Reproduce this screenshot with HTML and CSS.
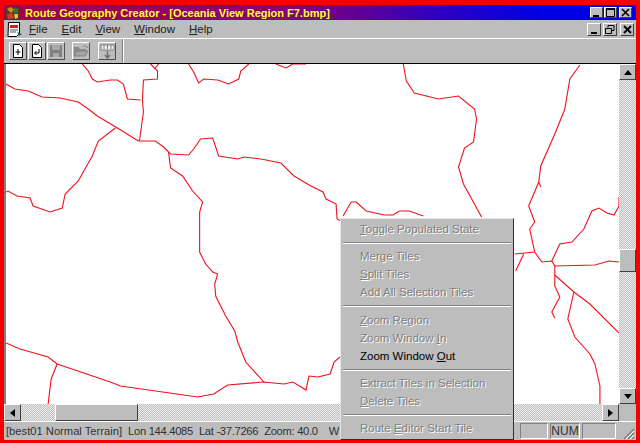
FILE: index.html
```html
<!DOCTYPE html>
<html lang="en">
<head>
  <meta charset="UTF-8">
  <meta name="viewport" content="width=device-width, initial-scale=1.0">
  <title>Route Geography Creator</title>
  <link rel="stylesheet" href="styles.css">
</head>
<body>
  <div class="window">
    <div class="titlebar">
      <svg class="app-icon" width="15" height="14" viewBox="0 0 15 14">
        <rect x="1" y="1" width="13" height="12" fill="#5a3a1a"/>
        <path d="M2 3l4-2 3 3-3 3z" fill="#d98a20"/>
        <path d="M8 2l5 1 0 4-4 0z" fill="#2f7a3a"/>
        <path d="M2 8l5-1 2 5-6 1z" fill="#c8402a"/>
        <path d="M9 8l4 0 0 4-3 1z" fill="#e0c040"/>
      </svg>
      <span class="title-text">Route Geography Creator - [Oceania View Region F7.bmp]</span>
      <div class="win-btns">
        <button class="win-btn"><svg width="9" height="9" viewBox="0 0 9 9"><rect x="1" y="7" width="6" height="2" fill="#000"/></svg></button>
        <button class="win-btn"><svg width="9" height="9" viewBox="0 0 9 9"><path d="M0.5 1.5h8v7h-8z" fill="none" stroke="#000"/><rect x="0" y="0" width="9" height="2" fill="#000"/></svg></button>
        <button class="win-btn btn-close"><svg width="9" height="9" viewBox="0 0 9 9"><path d="M1 1l7 7M8 1l-7 7" stroke="#000" stroke-width="1.6"/></svg></button>
      </div>
    </div>

    <div class="menubar">
      <svg class="doc-icon" width="16" height="15" viewBox="0 0 16 15">
        <path d="M1.5 .5h11v11l-3 3h-8.500z" fill="#fff" stroke="#000"/>
        <rect x="3" y="3" width="8" height="3" fill="#d02020"/>
        <path d="M3 8h8M3 10h6" stroke="#555"/>
        <path d="M10 10l5 2-3 2z" fill="#106060"/>
      </svg>
      <span class="menu-title"><u>F</u>ile</span>
      <span class="menu-title"><u>E</u>dit</span>
      <span class="menu-title"><u>V</u>iew</span>
      <span class="menu-title"><u>W</u>indow</span>
      <span class="menu-title"><u>H</u>elp</span>
      <div class="win-btns doc-btns">
        <button class="win-btn"><svg width="9" height="9" viewBox="0 0 9 9"><rect x="1" y="7" width="6" height="2" fill="#000"/></svg></button>
        <button class="win-btn"><svg width="10" height="9" viewBox="0 0 10 9"><path d="M3 2.500v-2h6v5h-2M.5 3.500h6v5h-6z" fill="none" stroke="#000"/></svg></button>
        <button class="win-btn btn-close"><svg width="9" height="9" viewBox="0 0 9 9"><path d="M1 1l7 7M8 1l-7 7" stroke="#000" stroke-width="1.800"/></svg></button>
      </div>
    </div>

    <div class="toolbar">
      <button class="tool-btn"><svg width="12" height="14" viewBox="0 0 12 14"><path d="M1.500 .5h6l3 3v10h-9z" fill="#fff" stroke="#000"/><path d="M6 5v6M3.500 8h5" stroke="#000"/></svg></button>
      <button class="tool-btn"><svg width="12" height="14" viewBox="0 0 12 14"><path d="M1.500 .5h6l3 3v10h-9z" fill="#fff" stroke="#000"/><path d="M8 5v4h-4M5.500 7l-2 2 2 2" fill="none" stroke="#000"/></svg></button>
      <button class="tool-btn"><svg width="14" height="14" viewBox="0 0 14 14"><path d="M1 1h11l1 1v11h-12z" fill="#808080"/><rect x="3" y="1" width="8" height="5" fill="#a8a8a8"/><rect x="4" y="9" width="6" height="4" fill="#a8a8a8"/></svg></button>
      <button class="tool-btn tool-gap"><svg width="16" height="12" viewBox="0 0 16 12"><path d="M1 2h5l1 2h6v7h-12z" fill="#8a8a8a"/><path d="M3 6h12l-3 5h-11z" fill="#a4a4a4" stroke="#808080"/><path d="M10 1l3 0 2 2" fill="none" stroke="#808080"/></svg></button>
      <button class="tool-btn tool-gap-wide"><svg width="15" height="15" viewBox="0 0 15 15"><path d="M1 1h13v5h-13z" fill="#f0f0f0" stroke="#808080"/><path d="M4 1v4M7.500 1v4M11 1v4" stroke="#808080"/><path d="M7.500 7v6M5 11l2.500 3 2.500-3" fill="none" stroke="#707070" stroke-width="1.500"/></svg></button>
      <div class="tool-sep"></div>
    </div>

    <div class="workspace">
      <svg class="map" viewBox="6 65 611 340" preserveAspectRatio="none" fill="none" stroke="#f2101c" stroke-width="1.100">
        <polyline points="82,65 88,72 92,80 97,83 110,81 117,81 123,85 127,100 140,101"/>
        <polyline points="150,65 157,72 157,80 143,81 142,101 143,113 139,142"/>
        <polyline points="158,65 154,70"/>
        <polyline points="6,85 15,90 28,92 42,98 60,99 78,103 88,110 97,117 117,129 138,142"/>
        <polyline points="138,142 155,142 163,148 170,155 188,156 193,150 200,140 212,139 218,157 237,160 243,158 260,160 280,164 293,177 310,187 322,193 325,200 335,205 336,220 340,222"/>
        <polyline points="168,153 170,169 182,177 192,192 202,203 199,213 199,253 205,265 212,273 217,275 214,285 215,297 225,317 234,332 237,343 245,363 263,383"/>
        <polyline points="115,129 98,142 92,157 78,182 65,195 62,209 50,213 33,207 30,199 17,197 8,192 6,193"/>
        <polyline points="6,344 20,350 48,358 57,365 110,383 120,387 197,398 213,395 227,386 263,383 283,385 292,383 305,391 308,377 317,378 329,375 333,363 340,357"/>
        <polyline points="57,365 51,380 48,405"/>
        <polyline points="275,65 285,69 292,65 305,65"/>
        <polyline points="188,65 193,73 198,84 203,80 217,81 228,85 238,80 240,72 248,65"/>
        <polyline points="402,65 405,82 413,94 437,100 457,97 473,110 475,120 472,143 463,149 457,168 462,185 480,218"/>
        <polyline points="578,66 568,80 563,110 553,135 539,167 537,183 527,207 533,223 528,230 533,253 540,263 550,262 553,267 553,287 558,298 550,313 553,319"/>
        <polyline points="537,183 539,188"/>
        <polyline points="342,217 350,203 355,203 365,212 383,216 392,216 398,212 408,212 422,217"/>
        <polyline points="617,198 617,207 612,216 605,214 597,209 590,212 582,230 570,243 558,245 550,262"/>
        <polyline points="513,255 533,253"/>
        <polyline points="522,255 514,272"/>
        <polyline points="553,267 593,266 607,262 617,263"/>
        <polyline points="553,276 572,293 588,305 617,334"/>
        <polyline points="572,293 566,320 573,338 588,355 593,365 598,387 598,405"/>
      </svg>

      <div class="vscroll">
        <button class="scroll-btn"><span class="arrow arrow-up"></span></button>
        <div class="track track-v">
          <div class="thumb thumb-v"></div>
        </div>
        <button class="scroll-btn"><span class="arrow arrow-down"></span></button>
      </div>

      <div class="hscroll">
        <button class="scroll-btn"><span class="arrow arrow-left"></span></button>
        <div class="track track-h">
          <div class="thumb thumb-h"></div>
        </div>
        <button class="scroll-btn"><span class="arrow arrow-right"></span></button>
      </div>

      <div class="corner"></div>
    </div>

    <div class="statusbar">
      <div class="status-text">
        <span>[best01 Normal Terrain]</span>
        <span class="status-num">Lon 144.4085</span>
        <span class="status-num">Lat -37.7266</span>
        <span class="status-num">Zoom: 40.0</span>
        <span class="status-last">W</span>
      </div>
      <div class="panel panel-a"></div>
      <div class="panel panel-num">NUM</div>
      <div class="panel panel-b"></div>
      <svg class="grip" width="14" height="14" viewBox="0 0 14 14" fill="none">
        <path d="M13 3L3 13M13 7L7 13M13 11L11 13" stroke="#808080" stroke-width="1.500"/>
        <path d="M13 5L5 13M13 9L9 13" stroke="#fff"/>
      </svg>
    </div>

    <div class="popup">
      <div class="item off"><u>T</u>oggle Populated State</div>
      <div class="sep"></div>
      <div class="item off">Merge Tiles</div>
      <div class="item off"><u>S</u>plit Tiles</div>
      <div class="item off">Add All Selection Tiles</div>
      <div class="sep sep-wide"></div>
      <div class="item off"><u>Z</u>oom Region</div>
      <div class="item off">Zoom Window <u>I</u>n</div>
      <div class="item">Zoom Window <u>O</u>ut</div>
      <div class="sep"></div>
      <div class="item off">Extract Tiles in Selection</div>
      <div class="item off"><u>D</u>elete Tiles</div>
      <div class="sep"></div>
      <div class="item off">Route <u>E</u>ditor Start Tile</div>
    </div>
  </div>
</body>
</html>
```

FILE: styles.css
```css
* {
  margin: 0;
  padding: 0;
  box-sizing: border-box;
  font-family: "Liberation Sans", Arial, sans-serif;
}

body {
  width: 640px;
  height: 443px;
  overflow: hidden;
  background: #f00;
}

.window {
  position: relative;
  width: 640px;
  height: 443px;
  border: solid #f50000;
  border-width: 5px 4px 3px 4px;
  background: #bdbdbd;
  display: flex;
  flex-direction: column;
  font-size: 11.5px;
  color: #000;
}

/* title bar */
.titlebar {
  height: 15px;
  flex: none;
  display: flex;
  align-items: center;
  padding-left: 1px;
  background: linear-gradient(to right, #a4004a 0%, #8a0070 45%, #3000c0 68%, #0000e4 85%);
}

.app-icon {
  flex: none;
}

.title-text {
  margin-left: 5px;
  font-size: 11px;
  font-weight: bold;
  color: #ffff30;
  white-space: nowrap;
}

.win-btns {
  margin-left: auto;
  display: flex;
  gap: 1px;
  padding-right: 4px;
}

.win-btn {
  width: 13px;
  height: 11px;
  display: flex;
  align-items: center;
  justify-content: center;
  background: #bdbdbd;
  border: 1px solid;
  border-color: #fff #404040 #404040 #fff;
}

.btn-close {
  margin-left: 1px;
}

/* menu */
.menubar {
  height: 19px;
  flex: none;
  display: flex;
  align-items: center;
  border-bottom: 1px solid #fff;
  padding-left: 3px;
}

.doc-icon {
  flex: none;
  margin-right: 6px;
}

.menu-title {
  margin-right: 14px;
  color: #202020;
}

.doc-btns {
  padding-right: 2px;
  gap: 2px;
}

.doc-btns .win-btn {
  width: 14px;
  height: 13px;
}

/* toolbar */
.toolbar {
  height: 25px;
  flex: none;
  display: flex;
  align-items: center;
  padding-left: 5px;
  gap: 1px;
  border-bottom: 1px solid #000;
}

.tool-btn {
  width: 18px;
  height: 18px;
  display: flex;
  align-items: center;
  justify-content: center;
  background: #bdbdbd;
  border: 1px solid;
  border-color: #fff #505050 #505050 #fff;
}

.tool-gap {
  margin-left: 6px;
}

.tool-gap-wide {
  margin-left: 7px;
}

.tool-sep {
  width: 2px;
  height: 24px;
  margin-left: 5px;
  background: #808080;
  border-right: 1px solid #fff;
}

/* map and scrollbars */
.workspace {
  flex: 1;
  min-height: 0;
  display: grid;
  grid-template-columns: 1fr 17px;
  grid-template-rows: 1fr 17px;
  border-left: 2px solid #808080;
}

.map {
  display: block;
  width: 100%;
  height: 100%;
  background: #fff;
}

.vscroll {
  display: flex;
  flex-direction: column;
}

.hscroll {
  display: flex;
  margin-left: -2px;
}

.scroll-btn {
  width: 17px;
  height: 16px;
  flex: none;
  display: flex;
  align-items: center;
  justify-content: center;
  background: #bdbdbd;
  border: 1px solid;
  border-color: #fff #404040 #404040 #fff;
}

.arrow {
  width: 0;
  height: 0;
  border: 4px solid transparent;
}

.arrow-up {
  border-top: 0;
  border-bottom: 5px solid #000;
}

.arrow-down {
  border-bottom: 0;
  border-top: 5px solid #000;
}

.arrow-left {
  border-left: 0;
  border-right: 5px solid #000;
}

.arrow-right {
  border-right: 0;
  border-left: 5px solid #000;
}

.hscroll .scroll-btn {
  height: 17px;
}

.track {
  flex: 1;
  background: repeating-conic-gradient(#eeeeee 0 25%, #bdbdbd 0 50%) 0 0 / 2px 2px;
}

.thumb {
  background: #bdbdbd;
  border: 1px solid;
  border-color: #fff #404040 #404040 #fff;
}

.track-v {
  padding-top: 169px;
}

.thumb-v {
  height: 23px;
}

.track-h {
  display: flex;
  padding-left: 34px;
}

.thumb-h {
  width: 83px;
}

.corner {
  background: #bdbdbd;
}

/* status bar */
.statusbar {
  height: 19px;
  flex: none;
  display: flex;
  align-items: center;
  gap: 2px;
  padding-left: 2px;
  border-top: 1px solid #fff;
  position: relative;
}

.status-text {
  width: 334px;
  flex: none;
  margin-right: auto;
  display: flex;
  gap: 6px;
  white-space: nowrap;
  font-size: 11.2px;
  color: #303030;
}

.status-num {
  letter-spacing: -0.3px;
}

.status-last {
  margin-left: 5px;
}

.panel {
  height: 16px;
  border: 1px solid;
  border-color: #808080 #fff #fff #808080;
  font-size: 12px;
  line-height: 14px;
  text-align: center;
  color: #303030;
}

.panel-a {
  width: 28px;
}

.panel-num {
  width: 30px;
}

.panel-b {
  width: 34px;
}

.grip {
  flex: none;
  margin: 3px 1px 0 3px;
}

/* context menu over the map */
.popup {
  position: absolute;
  left: 336px;
  top: 213px;
  width: 174px;
  height: 222px;
  padding: 1px 2px;
  background: #bdbdbd;
  border: 1px solid;
  border-color: #e4e4e4 #303030 #303030 #e4e4e4;
}

.item {
  height: 18px;
  line-height: 18px;
  padding-left: 17px;
  white-space: nowrap;
}

.item.off {
  color: #808080;
  text-shadow: 1px 1px 0 #fff;
}

.sep {
  height: 2px;
  margin: 4px 0 3px;
  background: #808080;
  border-bottom: 1px solid #fff;
}

.sep-wide {
  margin-bottom: 4px;
}
```
